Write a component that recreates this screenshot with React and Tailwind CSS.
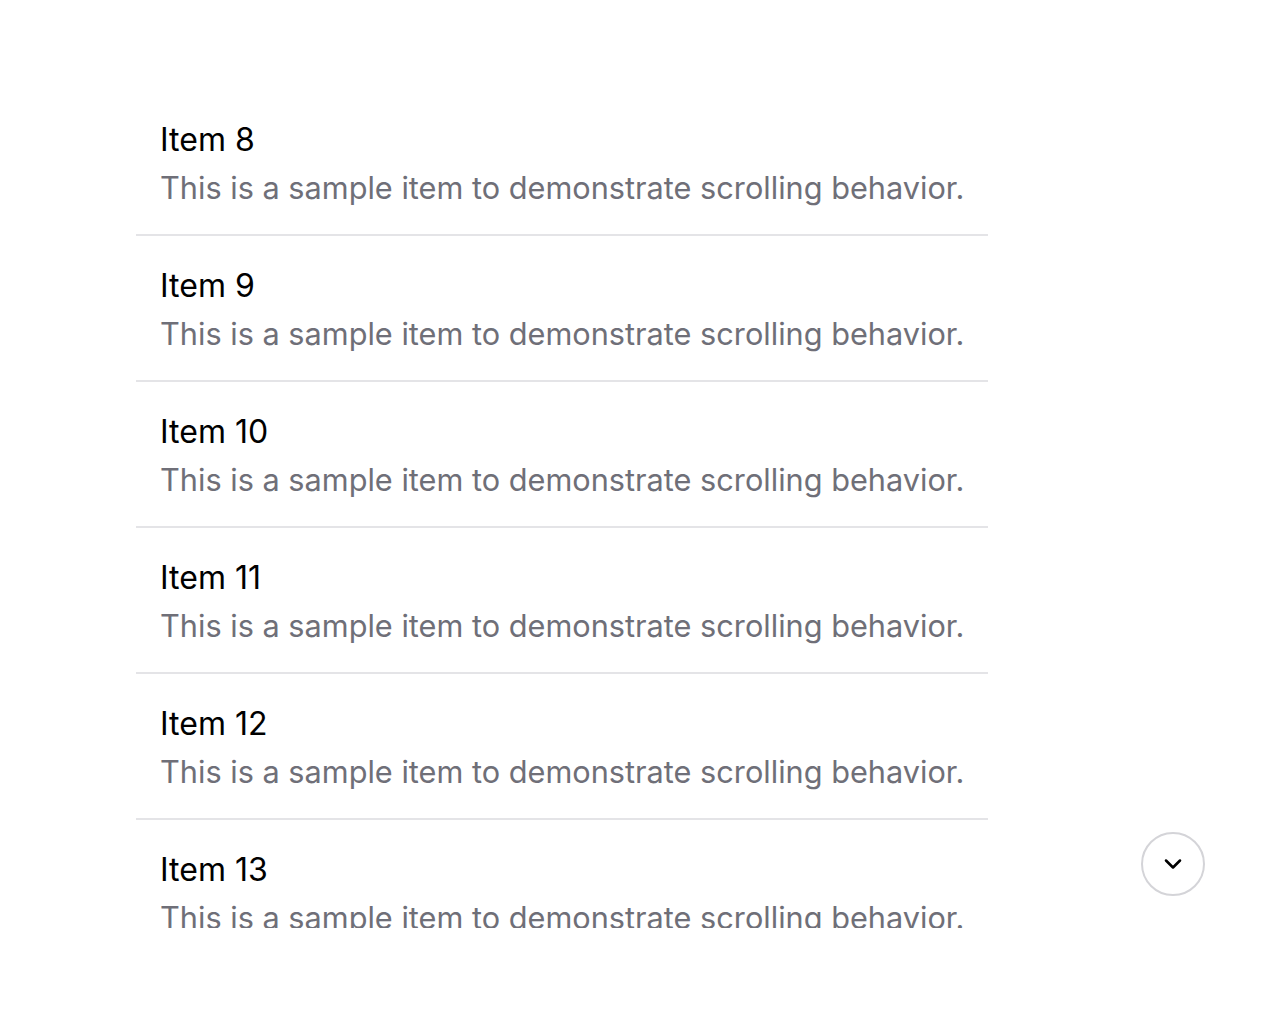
import { useEffect, useRef } from 'react';

const items = Array.from({ length: 20 }, (_, i) => i + 1);

export default function App() {
    const listRef = useRef(null);

    // Posição de scroll inicial (item 8 no topo)
    useEffect(() => {
        if (listRef.current) listRef.current.scrollTop = 7 * 146 + 16;
    }, []);

    return (
        <div className="min-h-screen bg-white font-['Inter',sans-serif]">
            <div className="relative h-[1034px] pl-[136px] pr-[284px] py-[106px]">
                <div
                    ref={listRef}
                    className="h-full overflow-y-auto [scrollbar-width:none]"
                >
                    {items.map((n) => (
                        <div key={n} className="h-[146px] border-b-2 border-[#e4e4e7] px-6 pt-[32px]">
                            <div className="text-[32px] leading-[36px] text-black">Item {n}</div>
                            <div className="mt-3 whitespace-nowrap text-[30.7px] leading-[36px] text-[#6f6f78]">
                                This is a sample item to demonstrate scrolling behavior.
                            </div>
                        </div>
                    ))}
                </div>

                <button
                    type="button"
                    aria-label="Scroll down"
                    className="absolute left-[1141px] top-[832px] flex h-16 w-16 items-center justify-center rounded-full border-2 border-[#d4d4d8] bg-white"
                >
                    <svg className="h-7 w-7" fill="none" viewBox="0 0 24 24" stroke="currentColor">
                        <path strokeLinecap="round" strokeLinejoin="round" strokeWidth={2.2} d="M6 9l6 6 6-6" />
                    </svg>
                </button>
            </div>
        </div>
    );
}
